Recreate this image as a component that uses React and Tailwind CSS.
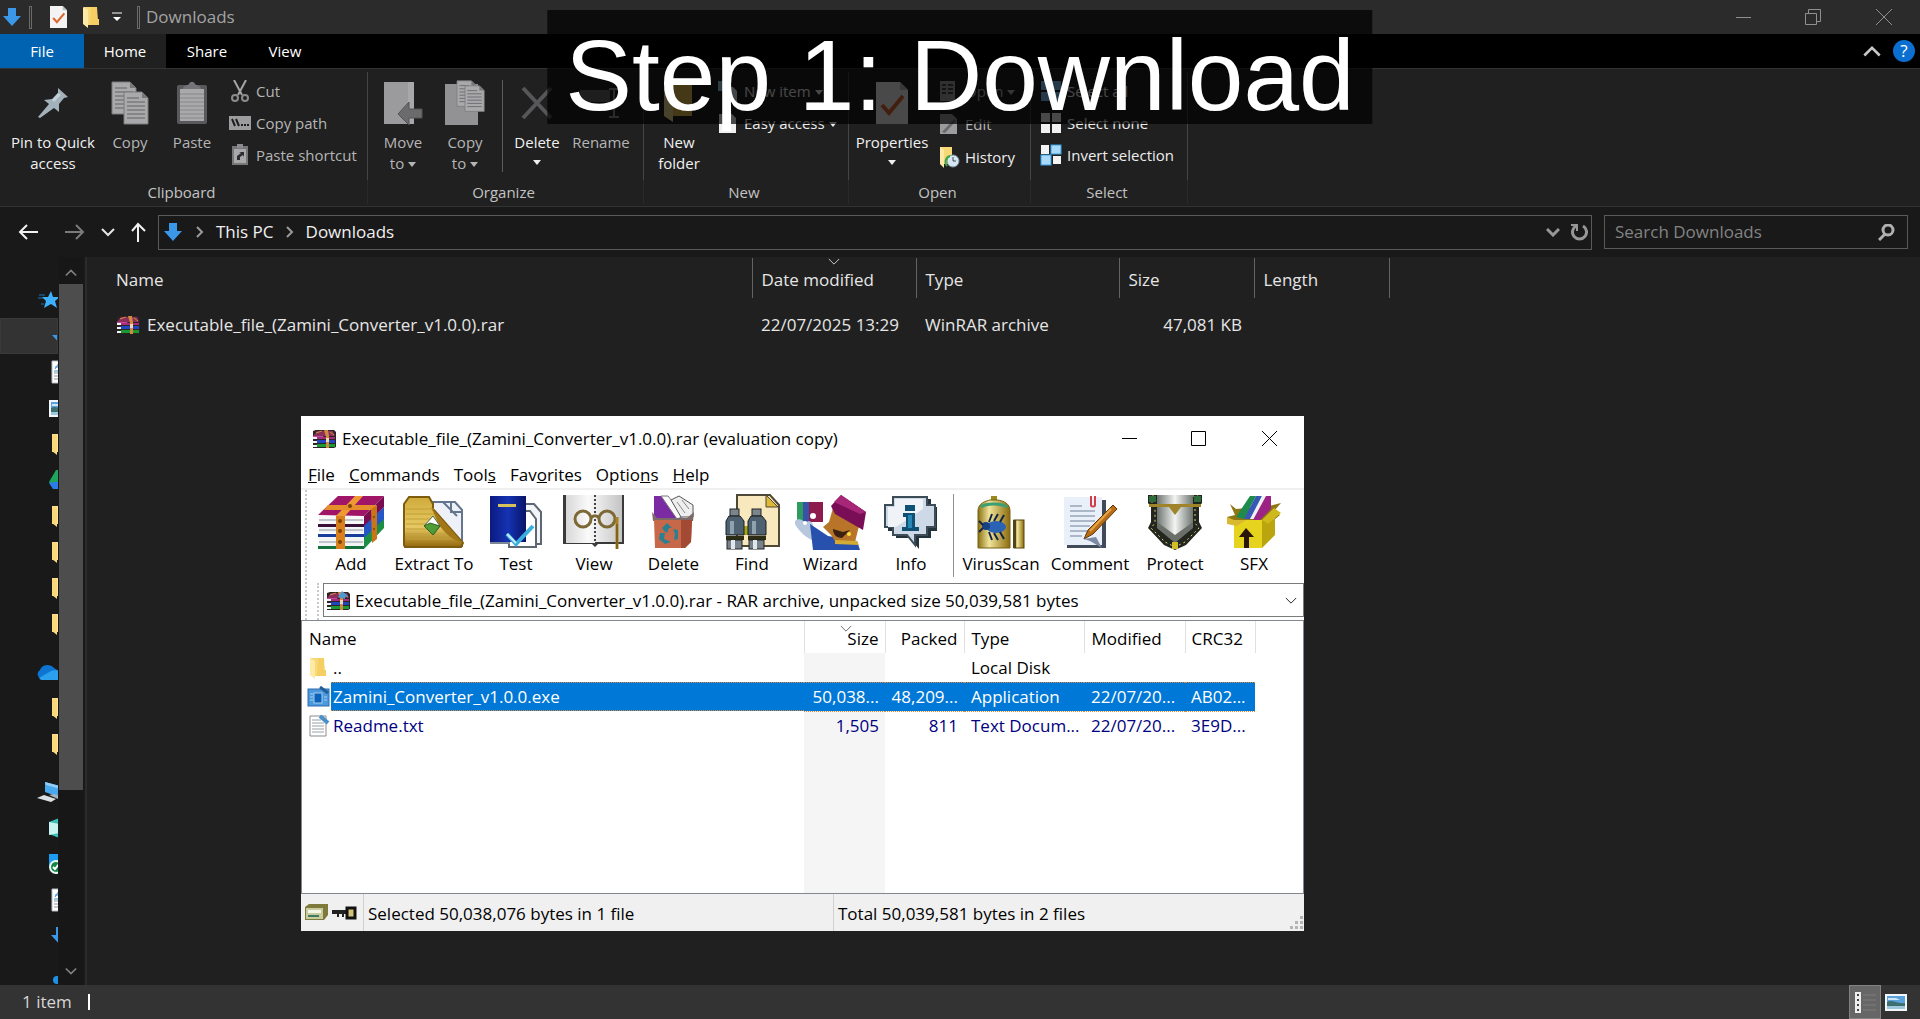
import React from "react";

/* ---------- Explorer icons ---------- */

const DownArrow = ({ className = "" }) => (
  <svg className={`block shrink-0 ${className}`} width="20" height="20" viewBox="0 0 20 20">
    <path d="M6 1h8v8h5l-9 10L1 9h5z" fill="#3b97e8" />
  </svg>
);

const Folder = ({ className = "" }) => (
  <svg className={`block shrink-0 ${className}`} width="18" height="22" viewBox="0 0 18 22">
    <path d="M2 1h13l1 15 -3 3H2z" fill="#f7d978" />
    <path d="M9 1h6v12h2v6H8z" fill="#f5cf63" />
    <path d="M1 1l5 3v18l-5-4z" fill="#ffe9a6" />
  </svg>
);

const SideFolder = () => (
  <svg className="block shrink-0" width="18" height="22" viewBox="0 0 18 22">
    <path d="M1 1h15v18H1z" fill="#ffe49b" />
    <path d="M1 1l5 1v20l-5-4z" fill="#fbd978" />
  </svg>
);

const CheckPage = ({ width, height, className = "" }) => (
  <svg className={`block shrink-0 ${className}`} width={width} height={height} viewBox="0 0 32 42" preserveAspectRatio="none">
    <path d="M0 0h24l8 8v34H0z" fill="#f3f3f3" />
    <path d="M24 0v8h8z" fill="#bdbdbd" />
    <path d="M6 23l7 8 14-17" fill="none" stroke="#dc6730" strokeWidth="4" />
  </svg>
);

const Pin = () => (
  <svg width="32" height="32" viewBox="0 0 32 32">
    <path d="M21 1l10 9-4 1-5 6 0 8-5-4L3 31l-2-1 11-13-5-4 8-1 6-6z" fill="#a3b1ba" />
    <path d="M21 6l-6 7 2 2 7-7z" fill="#c3d0d8" />
  </svg>
);

const Sheet = ({ x, y }) => (
  <g transform={`translate(${x} ${y})`}>
    <path d="M0 0h18l6 6v26H0z" fill="#a9a9ab" stroke="#7b7b7d" strokeWidth="1" />
    <path d="M18 0v6h6z" fill="#77777a" />
    <path d="M3 6h12M3 10h18M3 14h18M3 18h18M3 22h18M3 26h18" stroke="#626266" strokeWidth="1" />
  </g>
);

const CopyIcon = () => (
  <svg width="38" height="44" viewBox="0 0 38 44">
    <Sheet x={1} y={1} />
    <Sheet x={13} y={11} />
  </svg>
);

const PasteIcon = () => (
  <svg width="32" height="44" viewBox="0 0 32 44">
    <rect x="1" y="4" width="30" height="39" rx="2" fill="#59595c" />
    <rect x="4" y="8" width="24" height="32" fill="#a9a9ab" />
    <path d="M4 13h24M4 17h24M4 21h24M4 25h24M4 29h24M4 33h24M4 37h24" stroke="#88888b" />
    <path d="M7 8c0-4 4-3 6-5 1-3 5-3 6 0 2 2 6 1 6 5z" fill="#747478" />
  </svg>
);

const Scissors = () => (
  <svg width="22" height="22" viewBox="0 0 22 22" fill="none" stroke="#8b8b8d" strokeWidth="2">
    <path d="M5 0l8 15M17 0L9 15" stroke="#a5a5a7" />
    <circle cx="6" cy="18" r="3" />
    <circle cx="16" cy="18" r="3" />
  </svg>
);

const PathIcon = () => (
  <svg width="22" height="14" viewBox="0 0 22 14">
    <rect width="22" height="14" fill="#9c9c9e" />
    <path d="M3 3l3 7M7 3l3 7" stroke="#1d1d1d" strokeWidth="2" />
    <path d="M12 9h2M15 9h2M18 9h2" stroke="#1d1d1d" strokeWidth="2" />
  </svg>
);

const PasteShortcutIcon = () => (
  <svg width="22" height="22" viewBox="0 0 22 22">
    <rect x="3" y="2" width="16" height="19" fill="#77777a" />
    <rect x="5" y="5" width="12" height="14" fill="#a9a9ab" />
    <rect x="8" y="0" width="6" height="4" fill="#8b8b8d" />
    <path d="M8 16v-4l4-3-2-1h5v5l-1-2-3 2v3z" fill="#2d2d2f" />
  </svg>
);

const MoveToIcon = () => (
  <svg width="40" height="44" viewBox="0 0 40 44">
    <path d="M1 1h30v42H1z" fill="#9b9b9d" />
    <path d="M25 1h6v42h-6z" fill="#a8a8aa" />
    <path d="M15 33l11-12v7h13v9H26v7z" fill="#6b6b6e" stroke="#545457" />
  </svg>
);

const CopyToIcon = () => (
  <svg width="40" height="46" viewBox="0 0 40 46">
    <path d="M0 4h33v41H0z" fill="#929295" />
    <g transform="translate(12 0) scale(.8)"><Sheet x={0} y={1} /></g>
    <g transform="translate(20 5) scale(.8)"><Sheet x={0} y={1} /></g>
  </svg>
);

const DeleteX = () => (
  <svg width="34" height="34" viewBox="0 0 34 34" stroke="#57575a" strokeWidth="4">
    <path d="M3 2l28 30M31 2L3 32" />
  </svg>
);

const RenameIcon = () => (
  <svg width="42" height="30" viewBox="0 0 42 30">
    <rect x="0" y="2" width="30" height="12" fill="#66666a" />
    <path d="M34 2v26M29 1h10M29 29h10" stroke="#8e8e92" strokeWidth="2" />
  </svg>
);

const BigFolder = () => (
  <svg width="30" height="38" viewBox="0 0 30 38">
    <path d="M2 0h26v32H2z" fill="#e8bd4c" />
    <path d="M0 4l9 4v30l-9-6z" fill="#f6dc8c" />
  </svg>
);

const NewItemIcon = () => (
  <svg width="22" height="22" viewBox="0 0 22 22">
    <path d="M1 1h13v10H1z" fill="#9ecbe8" />
    <path d="M7 7h9l4 4v11H7z" fill="#e3e6ea" />
  </svg>
);

const EasyAccessIcon = () => (
  <svg width="22" height="22" viewBox="0 0 22 22">
    <path d="M2 2h13l4 4v15H2z" fill="#f0f0f0" />
    <path d="M5 8h10M5 11h10" stroke="#b8b8b8" />
  </svg>
);

const OpenIcon = () => (
  <svg width="22" height="22" viewBox="0 0 22 22">
    <path d="M2 1h15v20H2z" fill="#a0a0a2" />
    <path d="M4 5h4M4 9h4M4 13h4M10 5h5M10 9h5M10 13h5" stroke="#454547" strokeWidth="2" />
  </svg>
);

const EditIcon = () => (
  <svg width="22" height="22" viewBox="0 0 22 22">
    <path d="M2 1h12l5 5v15H2z" fill="#9c9c9e" />
    <path d="M4 19L16 6l2 2L7 20z" fill="#6b6b6e" />
  </svg>
);

const HistoryIcon = () => (
  <svg width="22" height="22" viewBox="0 0 22 22">
    <path d="M2 1h12v17H2z" fill="#f7d978" />
    <path d="M2 1l4 3v18l-4-4z" fill="#ffe9a6" />
    <circle cx="15" cy="15" r="6" fill="#d7e6f2" stroke="#7d92a0" />
    <path d="M15 11v4h3" stroke="#3a4a55" fill="none" />
    <path d="M9 20c-3-4-1-9 3-10" stroke="#3fa546" strokeWidth="2" fill="none" />
  </svg>
);

const Squares = ({ colors }) => (
  <svg width="22" height="22" viewBox="0 0 22 22">
    <rect x="1" y="1" width="9" height="9" fill={colors[0]} />
    <rect x="12" y="1" width="9" height="9" fill={colors[1]} />
    <rect x="1" y="12" width="9" height="9" fill={colors[2]} />
    <rect x="12" y="12" width="9" height="9" fill={colors[3]} />
  </svg>
);

const InvertIcon = () => (
  <svg width="22" height="22" viewBox="0 0 22 22">
    <rect x="1" y="1" width="8" height="9" fill="#f4f4f4" />
    <rect x="11" y="1" width="10" height="9" fill="#a8dbfa" stroke="#3b9fe0" />
    <rect x="1" y="11" width="10" height="10" fill="#a8dbfa" stroke="#3b9fe0" />
    <rect x="13" y="12" width="8" height="8" fill="#f4f4f4" />
  </svg>
);

const Caret = () => (
  <svg className="ml-1 inline-block align-middle" width="8" height="5" viewBox="0 0 8 5">
    <path d="M0 0h8L4 5z" fill="currentColor" />
  </svg>
);

const DocIcon = () => (
  <svg className="block shrink-0" width="20" height="24" viewBox="0 0 20 24">
    <path d="M2 1h17v22H2z" fill="#fff" stroke="#b9bcc0" />
    <path d="M5 9l4-6v6M5 7h4" stroke="#3c8fd0" fill="none" />
    <path d="M4 11h12" stroke="#3c8fd0" />
    <path d="M4 13h12M4 16h12M4 19h12" stroke="#8d9298" />
  </svg>
);

const Picture = ({ className = "" }) => (
  <svg className={`block shrink-0 ${className}`} width="22" height="17" viewBox="0 0 22 17">
    <rect width="22" height="17" fill="#f4f7fa" />
    <rect x="2" y="2" width="18" height="13" fill="#5aa2dd" />
    <path d="M2 8c5-3 9 2 18 1v3H2z" fill="#3c6f6d" />
    <path d="M2 12h18v3H2z" fill="#9cc7dd" />
    <path d="M3 4h8l4 2H3z" fill="#cfe6f7" />
  </svg>
);

const Star = () => (
  <svg className="block shrink-0" width="24" height="20" viewBox="0 0 24 20">
    <path d="M13 1l2 6h7l-5 4 2 7-6-4-7 4 2-7-4-4h6z" fill="#3fb0fa" />
    <path d="M1 5h6M0 8h5M3 14h3" stroke="#1d74b8" />
  </svg>
);

const Drive = () => (
  <svg className="block shrink-0" width="22" height="20" viewBox="0 0 22 20">
    <path d="M7 0h8L5 19 0 12z" fill="#1ea55b" />
    <path d="M15 0l7 12h-7L9 3z" fill="#f8c632" />
    <path d="M0 13l5-1h17l-4 7H4z" fill="#2b7ce8" />
  </svg>
);

const Cloud = () => (
  <svg className="block shrink-0" width="28" height="16" viewBox="0 0 28 16">
    <path d="M5 15a5 5 0 0 1-1-9C6 1 13-1 18 4l8 5-3 6z" fill="#0d74d1" />
    <path d="M3 14l12-7c6-2 12 1 12 5 0 3-2 4-4 4H5z" fill="#2aa0ef" />
  </svg>
);

const Computer = () => (
  <svg className="block shrink-0" width="28" height="22" viewBox="0 0 28 22">
    <path d="M8 1l19 5v12L8 11z" fill="#4aa9ee" />
    <path d="M8 1l19 5v3L9 4z" fill="#93cdf7" />
    <path d="M0 17l7-3 12 4-5 3z" fill="#dadfe4" />
    <path d="M12 14l5-1 11 4-5 2z" fill="#aab3ba" />
  </svg>
);

const Cube = () => (
  <svg className="block shrink-0" width="20" height="20" viewBox="0 0 20 20">
    <path d="M0 4L10 0l10 4v12l-10 4L0 16z" fill="#3cbfb9" />
    <path d="M0 4l10 2v9L0 17z" fill="#c9f3f1" />
  </svg>
);

const DesktopSynced = () => (
  <svg className="block shrink-0" width="22" height="22" viewBox="0 0 22 22">
    <rect x="1" y="1" width="20" height="14" fill="#1e9bf2" />
    <circle cx="8" cy="14" r="7" fill="#e8f6ee" />
    <circle cx="8" cy="14" r="5" fill="#16854a" />
    <path d="M5 14l2 2 4-5" stroke="#fff" fill="none" strokeWidth="2" />
  </svg>
);

const Note = () => (
  <svg className="block shrink-0" width="18" height="16" viewBox="0 0 18 16">
    <circle cx="5" cy="12" r="4" fill="#1e90e8" />
    <path d="M8 12V1l8 3" stroke="#1e90e8" strokeWidth="2" fill="none" />
  </svg>
);

const Chevron = ({ dir, width = 14, height = 9, stroke = 2, className = "" }) => (
  <svg className={`block shrink-0 ${className}`} width={width} height={height} viewBox="0 0 14 9" fill="none" stroke="currentColor" strokeWidth={stroke}>
    <path d={dir === "up" ? "M1 8l6-6 6 6" : "M1 1l6 6 6-6"} />
  </svg>
);

/* ---------- WinRAR icons ---------- */

const Books = ({ width, height, className = "" }) => (
  <svg className={`block shrink-0 ${className}`} width={width} height={height} viewBox="0 0 66 54" preserveAspectRatio="none">
    <path d="M1 39h45v14H1z" fill="#f3f4f6" />
    <path d="M0 51h46v3H0z" fill="#13713b" />
    <path d="M46 40l20-20v13L46 54z" fill="#1c8f45" />
    <path d="M1 29h45v9H1z" fill="#f3f4f6" />
    <path d="M0 39h46v3H0z" fill="#173d9d" />
    <path d="M46 30l20-18v12L46 43z" fill="#2456c8" />
    <path d="M1 21h45v8H1z" fill="#f8f8f8" />
    <path d="M0 29h46v3H0z" fill="#3a0f38" />
    <path d="M0 20L20 1h46L46 21z" fill="#a01567" />
    <path d="M46 21L66 1v11L46 31z" fill="#7a0d52" />
    <path d="M1 25h44M1 35h44M1 47h44" stroke="#c1c5cc" strokeWidth="2" />
    <path d="M18 21h9v33h-9z" fill="#d9801d" />
    <path d="M18 21L37 1h8L27 21z" fill="#ee9a34" />
    <path d="M10 10h49l-4 5H6z" fill="#e48f2b" />
    <path d="M53 14l6-4v34l-5 4z" fill="#c8751a" />
    <g fill="#7b4305"><circle cx="22" cy="26" r="2" /><circle cx="22" cy="36" r="2" /><circle cx="22" cy="47" r="2" /><circle cx="56" cy="22" r="1" /><circle cx="56" cy="34" r="1" /><circle cx="32" cy="11" r="2" /></g>
  </svg>
);

const SmallBooks = ({ arrow }) => (
  <svg className="block shrink-0" width="24" height="20" viewBox="0 0 24 20">
    <path d="M4 1h18l2 2v15l-2 1H1V2z" fill="#2c2422" />
    <path d="M5 2h16l2 5H1z" fill="#8a2f5c" />
    <path d="M1 7h10l1 2H1z" fill="#c24a9b" />
    <path d="M1 8h4v2H1zM1 12h4v2H1zM1 16h4v2H1z" fill="#f4f4f4" />
    <path d="M5 8h18v2H5z" fill="#a52b7d" />
    <path d="M5 11h18v3H5z" fill="#2147c0" />
    <path d="M5 15h18v3H5z" fill="#1a9a33" />
    <path d="M12 1h4l1 6v12h-3V8z" fill="#d18a3f" />
    <path d="M14 9h3v4h-3z" fill="#f0d9b0" />
    <path d="M4 4l6-2M18 3l4 3" stroke="#d18a3f" />
    {arrow && <path d="M12 6l4-6 6 5-3 1v2l-4-1z" fill="#4a9bd0" />}
  </svg>
);

const ExtractIcon = () => (
  <svg width="62" height="54" viewBox="0 0 62 54">
    <defs>
      <linearGradient id="gold" x1="0" y1="0" x2="0" y2="1"><stop offset="0" stopColor="#d0ab3c" /><stop offset=".6" stopColor="#e6c964" /><stop offset="1" stopColor="#94690d" /></linearGradient>
    </defs>
    <path d="M30 7h22l7 8v36H30z" fill="#eef2f8" stroke="#65758e" strokeWidth="2" />
    <path d="M48 7v10h10M40 7l14 14" stroke="#65758e" strokeWidth="2" fill="none" />
    <path d="M1 9l5-7h20l4 7v5l30 34-2 4H2l-1-2z" fill="url(#gold)" stroke="#7d5c0e" strokeWidth="2" />
    <path d="M3 14h28M3 19h30M3 24h24M3 29h22M3 34h24M3 39h40M3 44h50" stroke="#c29f37" />
    <path d="M28 12l32 36c-10-2-18-10-24-18z" fill="#a37618" />
    <path d="M21 31l9-10 7 10-7 9z" fill="#fff" stroke="#4c6b3c" />
    <path d="M21 31l6-3 10 3-7 9z" fill="#4f9b35" stroke="#355f28" />
  </svg>
);

const TestIcon = () => (
  <svg width="54" height="54" viewBox="0 0 54 54">
    <defs><linearGradient id="cover"><stop offset="0" stopColor="#0a1a80" /><stop offset=".5" stopColor="#1633b4" /><stop offset="1" stopColor="#081468" /></linearGradient></defs>
    <path d="M34 9h11l7 8v32H34z" fill="#f2f4f8" stroke="#5d6673" strokeWidth="2" />
    <path d="M20 16h21l6 8v28H20z" fill="#fff" stroke="#5d6673" strokeWidth="2" />
    <path d="M1 1h36v46H1z" fill="url(#cover)" />
    <path d="M1 47h20v2H1z" fill="#7c8794" />
    <path d="M9 9h18v3H9z" fill="#d7c15a" />
    <path d="M18 39l9 10 17-18" stroke="#3aaede" strokeWidth="4" fill="none" />
    <path d="M18 39l9 9" stroke="#c2ecfb" strokeWidth="2" />
  </svg>
);

const ViewIcon = () => (
  <svg width="64" height="56" viewBox="0 0 64 56">
    <defs><linearGradient id="leaf"><stop offset="0" stopColor="#d8d8d8" /><stop offset=".4" stopColor="#fafafa" /><stop offset="1" stopColor="#c4c4c4" /></linearGradient></defs>
    <path d="M1 1v49h29l3 3 3-3h26V1" fill="#3a3a3a" />
    <path d="M4 1h29v48H4zM33 1h27v47H33z" fill="url(#leaf)" />
    <path d="M33 1v50" stroke="#444" strokeWidth="2" strokeDasharray="2 2" />
    <g fill="none" stroke="#7d6936" strokeWidth="3"><circle cx="21" cy="25" r="8" /><circle cx="45" cy="25" r="8" /><path d="M29 24c2-3 6-3 8 0" /></g>
    <path d="M55 23v32" stroke="#a98323" strokeWidth="3" />
    <path d="M55 30v25" stroke="#5b440b" />
  </svg>
);

const DeleteIcon = () => (
  <svg width="46" height="54" viewBox="0 0 46 54">
    <path d="M3 1h10l14 22H3z" fill="#7b2aa4" />
    <path d="M10 1h7l16 20-7 3z" fill="#fafafa" stroke="#777" />
    <path d="M20 5l8-4 14 9v12H30z" fill="#eee" stroke="#555" />
    <path d="M26 7l8 11M31 5l7 9" stroke="#888" />
    <path d="M1 17l5 6h30l7-6-1 9H2z" fill="#7d6a68" />
    <path d="M3 25h38l-1 22-6 6H4z" fill="#c8684a" />
    <path d="M30 25h11l-1 22-6 6h-4z" fill="#a34a34" />
    <path d="M11 33l5-5 5 5h-3l-2 5-3-2zM22 34l5 1v9l-4 1 1-6zM9 38h5l-1 6 7 3-6 2-6-5z" fill="#2a8090" />
  </svg>
);

const FindIcon = () => (
  <svg width="56" height="56" viewBox="0 0 56 56">
    <path d="M13 1h33l9 10v41H13z" fill="#f7e9bd" stroke="#4e4937" strokeWidth="2" />
    <path d="M42 1v12h12z" fill="#dcb834" stroke="#4e4937" />
    <path d="M19 32h9v9h-9z" fill="#a4a511" />
    {[2, 24].map((x) => (
      <g key={x} transform={`translate(${x} 15)`}>
        <rect x="4" y="0" width="9" height="7" fill="#7a858c" stroke="#20262a" />
        <path d="M3 7h11l4 5v14H0V12z" fill="#4d6170" stroke="#1a2024" />
        <path d="M4 12h4v13H4z" fill="#8ea3ae" />
        <rect x="0" y="27" width="18" height="4" fill="#2d2d13" />
        <rect x="1" y="31" width="15" height="9" fill="#77828a" stroke="#222" />
        <rect x="5" y="31" width="4" height="9" fill="#e1e7ea" />
      </g>
    ))}
  </svg>
);

const WizardIcon = () => (
  <svg width="72" height="56" viewBox="0 0 72 56">
    <path d="M2 8h6v20H2z" fill="#2e9b61" /><path d="M8 8h6v20H8z" fill="#3653a8" /><path d="M14 8h14v20H14z" fill="#8e1b4e" />
    <path d="M0 27c6-5 8 3 14 0 6 2 4 6 2 10l6 6-3 4C12 44 4 38 0 30z" fill="#b7c8dd" />
    <path d="M15 30l18 12 29 5 3 9H18z" fill="#2850ad" />
    <path d="M38 14l26 18-4 16-20-1-4-6-8-8 6-5z" fill="#b8752a" />
    <path d="M38 35c0 5 3 9 9 9l8-8-7 2z" fill="#3a2112" />
    <path d="M46 1l25 17-3 18-28-16-4-8z" fill="#7a0e56" />
    <path d="M46 1l25 17-6 2-26-12z" fill="#a82678" />
    <circle cx="54" cy="40" r="2" fill="#ffdf36" />
    <path d="M40 46l22 1 2 4-24-1z" fill="#d4ab35" />
    <g fill="#fff"><circle cx="18" cy="22" r="3" /><circle cx="10" cy="29" r="2" /></g>
  </svg>
);

const InfoIcon = () => (
  <svg width="54" height="54" viewBox="0 0 54 54">
    <path d="M11 4h36v8h6v24h-6v7H35v11L26 43H12v-7H4V13h7z" fill="#23343d" />
    <path d="M9 2h34v8h8v22h-8v8H31v10l-8-10H9v-8H1V10h8z" fill="#cdd9e6" stroke="#3c4d57" strokeWidth="2" />
    <path d="M11 4h28v10L12 32H4V12h7z" fill="#eff3f8" />
    <path d="M21 10h10v6H21zM19 18h12v14h4v4H18v-4h4V22h-3z" fill="#0f5175" />
    <path d="M24 20h4v13h-4z" fill="#2688b5" />
  </svg>
);

const VirusIcon = () => (
  <svg width="48" height="54" viewBox="0 0 48 54">
    <defs><linearGradient id="can"><stop offset="0" stopColor="#8a7012" /><stop offset=".35" stopColor="#f0e49a" /><stop offset="1" stopColor="#8c6b0d" /></linearGradient></defs>
    <path d="M14 1h6v5h-6z" fill="#9a891b" />
    <path d="M1 16c0-8 8-10 12-11h8c5 1 12 3 12 11v37H1z" fill="url(#can)" stroke="#776114" />
    <path d="M4 12c5-4 20-4 26 0" stroke="#3da075" strokeWidth="3" fill="none" />
    <rect x="37" y="25" width="10" height="28" fill="url(#can)" stroke="#574508" />
    <path d="M36 25h3v28h-3z" fill="#51441a" />
    <ellipse cx="19" cy="32" rx="10" ry="6" fill="#2a63b4" /><circle cx="9" cy="31" r="4" fill="#173f81" />
    <path d="M12 27l3-8M17 26l4-7M23 27l4-7M12 37l3 8M17 38l4 7M23 37l4 7M6 30l-4-4M6 33l-4 4" stroke="#142344" strokeWidth="2" />
  </svg>
);

const CommentIcon = () => (
  <svg width="54" height="54" viewBox="0 0 54 54">
    <path d="M4 5h39v48H4z" fill="#404a58" />
    <path d="M1 2h38v48H1z" fill="#e9f0fa" />
    <path d="M7 11h12M7 16h25M7 21h25M7 26h25M7 31h20M7 36h17M7 41h12" stroke="#6f8096" strokeWidth="1" />
    <path d="M28 1v9c0 2 4 2 4 0V1" stroke="#d23d4a" strokeWidth="2" fill="none" />
    <path d="M50 10l4 4-24 25-9 5 4-9z" fill="#b96d17" stroke="#5e3605" />
    <path d="M48 14L27 36" stroke="#e5a648" strokeWidth="2" />
    <path d="M21 44l6 2 12 7-6-11z" fill="#7c8ba3" />
  </svg>
);

const ShieldIcon = () => (
  <svg width="56" height="56" viewBox="0 0 56 56">
    <defs><linearGradient id="steel"><stop offset="0" stopColor="#6e746f" /><stop offset=".5" stopColor="#f2f5f3" /><stop offset="1" stopColor="#6e746f" /></linearGradient></defs>
    <path d="M1 1h54v8l-3 4v15l3 6-16 17-11 5-11-5L1 34l3-6V13L1 9z" fill="#23251f" />
    <path d="M5 2h46v7l-3 4v16l4 5-14 14-10 5-10-5L4 34l4-5V13L5 9z" fill="none" stroke="#ddd36f" strokeWidth="1" strokeDasharray="2 3" />
    <path d="M10 1h36v29L28 47 10 30z" fill="url(#steel)" />
    <path d="M10 28l18 13 18-13v6L28 49 10 34z" fill="#6a7069" />
    <path d="M2 10h52v3H34l-6 8-6-8H2z" fill="#9f8429" />
    <path d="M2 2h7v6H2zM47 2h7v6h-7z" fill="#2e6c3c" />
    <path d="M25 48h6v7h-6z" fill="#d2bc2a" />
  </svg>
);

const SfxIcon = () => (
  <svg width="56" height="54" viewBox="0 0 56 54">
    <path d="M10 14L4 9l5 11-8 2 7 8h34l12-10-6-4 7-8-12 3z" fill="#8f7614" />
    <path d="M10 22L24 1h6L18 24z" fill="#1e8a4b" /><path d="M18 24L30 1h6L26 24z" fill="#3559b5" /><path d="M24 24L36 1h4L29 24z" fill="#f1f1f1" /><path d="M27 25L40 1h5v13L34 25z" fill="#9a2383" />
    <path d="M8 25h28v28H8z" fill="#e6d31d" />
    <path d="M36 25l13-12v27L36 53z" fill="#baa50e" />
    <path d="M36 25l12-12 7 5-13 11z" fill="#cdb91c" />
    <path d="M1 22l7 3h12l-9 6-10-2z" fill="#d8b92f" />
    <path d="M20 33l8 9h-5v11h-5V42h-5z" fill="#2a1405" />
  </svg>
);

const AppIcon = () => (
  <svg className="block shrink-0" width="23" height="22" viewBox="0 0 23 22">
    <rect x="1" y="3" width="21" height="17" fill="#4b98dc" stroke="#2d6fb1" />
    <rect x="7" y="7" width="8" height="10" fill="#0b62b6" stroke="#a6d0f2" />
    <path d="M3 8h3M3 11h3M3 14h3M17 11h3M17 14h3" stroke="#a8d2f4" />
    <path d="M13 1l8 6" stroke="#235f98" strokeWidth="3" />
  </svg>
);

const TxtIcon = () => (
  <svg className="block shrink-0" width="23" height="22" viewBox="0 0 23 22">
    <path d="M3 1h16v20H3z" fill="#fff" stroke="#8b8b8b" />
    <path d="M5 5h9M5 8h12M5 11h12M5 14h12M5 17h12" stroke="#9aa0a6" />
    <path d="M13 1l8 7" stroke="#4a90c8" strokeWidth="4" />
  </svg>
);

/* ---------- Explorer ribbon parts ---------- */

const BigButton = ({ icon, lines, caret, className = "" }) => (
  <button type="button" className={`flex flex-col items-center whitespace-nowrap pt-2 leading-[21px] ${className}`}>
    <span className="mb-[6px] flex h-[46px] items-center justify-center">{icon}</span>
    {lines.map((l, i) => (
      <span key={l}>
        {l}
        {caret === "inline" && i === lines.length - 1 && <Caret />}
      </span>
    ))}
    {caret === "below" && <span className="-ml-1 leading-[16px]"><Caret /></span>}
  </button>
);

const SmallButton = ({ icon, label, caret, dim }) => (
  <button type="button" className={`flex h-8 items-center gap-[5px] whitespace-nowrap ${dim ? "text-[#b5b5b5]" : "text-[#ededed]"}`}>
    <span className="flex w-[22px] justify-center">{icon}</span>
    <span>{label}{caret && <Caret />}</span>
  </button>
);

const Group = ({ label, className, children }) => (
  <section aria-label={label} className={`flex flex-col ${className}`}>
    <div className="flex h-[108px] border-r border-[#454545]">{children}</div>
    <div className="border-r border-[#2a2a2a] pr-1 text-center leading-[24px] text-[#c3c3c3]">{label}</div>
  </section>
);

const Ribbon = () => (
  <div className="flex h-[139px] border-b border-t border-[#333] bg-[#202020] pt-[3px] text-[15px] text-[#f0f0f0]">
    <Group label="Clipboard" className="w-[368px]">
      <BigButton className="ml-1 w-[98px]" icon={<Pin />} lines={["Pin to Quick", "access"]} />
      <BigButton className="w-14 text-[#b5b5b5]" icon={<CopyIcon />} lines={["Copy"]} />
      <BigButton className="w-[68px] text-[#b5b5b5]" icon={<PasteIcon />} lines={["Paste"]} />
      <div className="flex flex-col pl-[3px] pt-[3px]">
        <SmallButton dim icon={<Scissors />} label="Cut" />
        <SmallButton dim icon={<PathIcon />} label="Copy path" />
        <SmallButton dim icon={<PasteShortcutIcon />} label="Paste shortcut" />
      </div>
    </Group>
    <Group label="Organize" className="w-[276px]">
      <BigButton className="w-[70px] text-[#b5b5b5]" icon={<MoveToIcon />} lines={["Move", "to"]} caret="inline" />
      <BigButton className="w-[54px] text-[#b5b5b5]" icon={<CopyToIcon />} lines={["Copy", "to"]} caret="inline" />
      <div className="mx-[10px] my-2 w-px bg-[#5c5c5c]" />
      <BigButton className="w-[48px]" icon={<DeleteX />} lines={["Delete"]} caret="below" />
      <BigButton className="w-[80px] text-[#b5b5b5]" icon={<RenameIcon />} lines={["Rename"]} />
    </Group>
    <Group label="New" className="w-[205px]">
      <BigButton className="w-[70px]" icon={<BigFolder />} lines={["New", "folder"]} />
      <div className="flex flex-col pl-[3px] pt-[3px]">
        <SmallButton icon={<NewItemIcon />} label="New item" caret />
        <SmallButton icon={<EasyAccessIcon />} label="Easy access" caret />
      </div>
    </Group>
    <Group label="Open" className="w-[182px]">
      <BigButton className="w-[86px]" icon={<CheckPage width={32} height={42} />} lines={["Properties"]} caret="below" />
      <div className="flex flex-col gap-[1px] pl-[3px] pt-[3px]">
        <SmallButton dim icon={<OpenIcon />} label="Open" caret />
        <SmallButton dim icon={<EditIcon />} label="Edit" />
        <SmallButton icon={<HistoryIcon />} label="History" />
      </div>
    </Group>
    <Group label="Select" className="w-[157px]">
      <div className="flex flex-col pl-[9px] pt-[3px]">
        <SmallButton icon={<Squares colors={["#7cc4f2", "#7cc4f2", "#7cc4f2", "#7cc4f2"]} />} label="Select all" />
        <SmallButton icon={<Squares colors={["#f0f0f0", "#f0f0f0", "#f0f0f0", "#f0f0f0"]} />} label="Select none" />
        <SmallButton icon={<InvertIcon />} label="Invert selection" />
      </div>
    </Group>
  </div>
);

const TitleBar = () => (
  <header className="flex h-[34px] items-center bg-[#2b2b2b] text-[17px] text-[#a3a3a3]">
    <DownArrow className="ml-[2px]" />
    <span className="ml-[7px] h-[23px] w-[3px] border border-[#6a6a6a]" />
    <button type="button" aria-label="Properties" className="ml-[18px]"><CheckPage width={17} height={22} /></button>
    <button type="button" aria-label="New folder" className="ml-[15px]"><Folder /></button>
    <button type="button" aria-label="Customize toolbar" className="ml-[12px]">
      <svg className="block" width="10" height="10" viewBox="0 0 10 10"><path d="M0 1h10" stroke="#fff" /><path d="M1 5h8L5 9z" fill="#fff" /></svg>
    </button>
    <span className="ml-[15px] h-[23px] w-[3px] border border-[#6a6a6a]" />
    <h1 className="ml-[6px]">Downloads</h1>
    <div className="ml-auto flex items-center text-[#8f8f8f]">
      <button type="button" aria-label="Minimize" className="flex w-[70px] justify-center"><svg width="15" height="15"><path d="M0 7.5h15" stroke="currentColor" /></svg></button>
      <button type="button" aria-label="Restore" className="flex w-[70px] justify-center"><svg width="16" height="16" fill="none" stroke="currentColor"><path d="M.5 4.500h11v11h-11zM3.500 4V.5h12v12H12" /></svg></button>
      <button type="button" aria-label="Close" className="flex w-[72px] justify-center"><svg width="16" height="16" stroke="currentColor"><path d="M0 0l16 16M16 0L0 16" /></svg></button>
    </div>
  </header>
);

const Tabs = () => (
  <nav className="flex h-[34px] items-stretch bg-black text-[15px] text-white">
    <button type="button" className="w-[84px] bg-[#0063b1]">File</button>
    <button type="button" className="w-[82px] bg-[#202020]">Home</button>
    <button type="button" className="w-[82px]">Share</button>
    <button type="button" className="w-[74px]">View</button>
    <div className="ml-auto flex items-center gap-3 pr-[5px]">
      <button type="button" aria-label="Collapse ribbon"><Chevron dir="up" width={18} height={12} className="text-[#c8c8c8]" /></button>
      <button type="button" aria-label="Help" className="size-[22px] rounded-full bg-[#0a6fd0] text-[17px] leading-[22px] text-white">?</button>
    </div>
  </nav>
);

const Arrow = ({ d, color }) => (
  <svg className="block" width="20" height="20" viewBox="0 0 20 20" fill="none" stroke={color} strokeWidth="2"><path d={d} /></svg>
);

const Crumb = () => (
  <svg className="block shrink-0 text-[#9b9b9b]" width="8" height="12" viewBox="0 0 8 12" fill="none" stroke="currentColor" strokeWidth="2"><path d="M1 1l5 5-5 5" /></svg>
);

const AddressRow = () => (
  <div className="flex h-[50px] items-center bg-[#191919] pr-3 text-[17px]">
    <button type="button" aria-label="Back" className="ml-[18px]"><Arrow d="M9 3l-7 7 7 7M2 10h18" color="#f2f2f2" /></button>
    <button type="button" aria-label="Forward" className="ml-[27px]"><Arrow d="M11 3l7 7-7 7M18 10H0" color="#7b7b7b" /></button>
    <button type="button" aria-label="Recent locations" className="ml-[16px]"><Chevron dir="down" className="text-[#e5e5e5]" /></button>
    <button type="button" aria-label="Up" className="ml-[14px]"><Arrow d="M3 9l6-7 7 7M9 2v18" color="#f2f2f2" /></button>
    <div className="ml-[9px] flex h-[35px] flex-1 items-center border border-[#5a5a5a] text-[#f0f0f0]">
      <DownArrow className="ml-1" />
      <span className="ml-[13px]"><Crumb /></span>
      <a href="#this-pc" className="ml-[12px]">This PC</a>
      <span className="ml-[12px]"><Crumb /></span>
      <a href="#downloads" className="ml-[12px]">Downloads</a>
      <button type="button" aria-label="Previous locations" className="ml-auto"><Chevron dir="down" stroke={3} className="text-[#979797]" /></button>
      <button type="button" aria-label="Refresh" className="ml-[11px] mr-[3px]">
        <svg className="block" width="17" height="18" viewBox="0 0 17 18" fill="none" stroke="#979797" strokeWidth="3"><path d="M12 3a7 7 0 1 1-7 0" /><path d="M0 2h6v6" strokeWidth="2" /></svg>
      </button>
    </div>
    <label className="ml-3 flex h-[34px] w-[304px] items-center border border-[#5a5a5a] pl-[10px] pr-3">
      <input type="text" aria-label="Search Downloads" placeholder="Search Downloads" className="min-w-0 flex-1 bg-transparent outline-none placeholder:text-[#838383]" />
      <svg width="17" height="17" viewBox="0 0 17 17" fill="none" stroke="#b0b0b0" strokeWidth="3"><circle cx="10" cy="6" r="5" /><path d="M7 10l-6 6" /></svg>
    </label>
  </div>
);

const sideGroups = [
  [
    ["Quick access", Star, "pl-[38px]"],
    ["Downloads", DownArrow, "pl-[50px]", true],
    ["Documents", DocIcon, "pl-[50px]"],
    ["Pictures", Picture, "pl-[49px]"],
    ["Folder 1", SideFolder, "pl-[51px]"],
    ["Google Drive", Drive, "pl-[49px]"],
    ["Folder 2", SideFolder, "pl-[51px]"],
    ["Folder 3", SideFolder, "pl-[51px]"],
    ["Folder 4", SideFolder, "pl-[51px]"],
    ["Folder 5", SideFolder, "pl-[51px]"],
  ],
  [
    ["OneDrive", Cloud, "pl-[36px]"],
    ["OneDrive folder 1", SideFolder, "pl-[51px]"],
    ["OneDrive folder 2", SideFolder, "pl-[51px]"],
  ],
  [
    ["This PC", Computer, "pl-[37px]"],
    ["3D Objects", Cube, "pl-[49px]"],
    ["Desktop", DesktopSynced, "pl-[48px]"],
    ["PC documents", DocIcon, "pl-[50px]"],
    ["PC downloads", DownArrow, "pl-[50px]"],
    ["Music", Note, "pl-[52px] pt-2"],
  ],
];

const Sidebar = () => (
  <aside className="flex w-[87px] shrink-0 border-r-2 border-[#2b2b2b] bg-[#191919]">
    <nav aria-label="Folders" className="flex w-[58px] flex-col gap-3 overflow-hidden pt-[25px]">
      {sideGroups.map((g) => (
        <div key={g[0][0]}>
          {g.map(([name, Icon, pad, on]) => (
            <button key={name} type="button" aria-label={name} className={`flex h-9 w-full items-center overflow-hidden ${pad} ${on ? "border border-[#3a3a3a] bg-[#333]" : ""}`}>
              <Icon />
            </button>
          ))}
        </div>
      ))}
    </nav>
    <div className="ml-px flex w-6 flex-col items-center bg-[#171717] text-[#808080]">
      <button type="button" aria-label="Scroll up" className="flex h-[27px] shrink-0 items-center"><Chevron dir="up" width={12} height={9} className="mt-1" /></button>
      <div className="flex w-full flex-1 flex-col"><div className="h-[75%] bg-[#4d4d4d]" /></div>
      <button type="button" aria-label="Scroll down" className="flex h-[27px] shrink-0 items-center"><Chevron dir="down" width={12} height={9} /></button>
    </div>
  </aside>
);

const FileTable = () => (
  <main className="flex-1 bg-[#202020] pt-px text-[17px] text-[#e6e6e6]">
    <table className="w-full table-fixed border-collapse text-left">
      <colgroup><col className="w-[665px]" /><col className="w-[164px]" /><col className="w-[203px]" /><col className="w-[135px]" /><col className="w-[135px]" /><col /></colgroup>
      <thead>
        <tr className="h-10">
          <th className="border-r border-[#636363] pl-[29px] pt-1 font-normal">Name</th>
          <th className="relative whitespace-nowrap border-r border-[#636363] pl-[9px] pt-1 font-normal">
            Date modified
            <Chevron dir="down" width={12} height={8} stroke={1} className="absolute left-[75px] top-0" />
          </th>
          <th className="border-r border-[#636363] pl-[9px] pt-1 font-normal">Type</th>
          <th className="border-r border-[#636363] pl-[9px] pt-1 font-normal">Size</th>
          <th className="border-r border-[#636363] pl-[9px] pt-1 font-normal">Length</th>
          <th />
        </tr>
      </thead>
      <tbody>
        <tr className="h-[54px] whitespace-nowrap">
          <td className="pl-[29px]"><span className="flex items-center gap-[7px]"><SmallBooks />Executable_file_(Zamini_Converter_v1.0.0).rar</span></td>
          <td className="pl-[9px]">22/07/2025 13:29</td>
          <td className="pl-[9px]">WinRAR archive</td>
          <td className="pr-3 text-right">47,081 KB</td>
          <td />
          <td />
        </tr>
      </tbody>
    </table>
  </main>
);

const StatusBar = () => (
  <footer className="flex h-[34px] items-center bg-[#333] pl-[22px] text-[17px] text-[#d6d6d6]">
    1 item
    <span className="ml-4 h-4 w-[2px] bg-white" />
    <button type="button" aria-label="Details view" className="ml-auto flex h-full w-8 items-center border border-[#828282] bg-[#666] pl-[5px]">
      <svg width="24" height="21" viewBox="0 0 24 21"><path d="M0 0h6v21H0z" fill="#eee" /><path d="M2 2h2v2H2zM2 7h2v2H2zM2 12h2v2H2zM2 17h2v2H2z" fill="#444" /><path d="M8 3h13M8 8h13M8 13h13M8 18h13" stroke="#7c7c7c" /></svg>
    </button>
    <button type="button" aria-label="Thumbnail view" className="ml-1 mr-[13px]"><Picture /></button>
  </footer>
);

/* ---------- WinRAR window ---------- */

const menu = [["", "F", "ile"], ["", "C", "ommands"], ["Tool", "s", ""], ["Fav", "o", "rites"], ["Optio", "n", "s"], ["", "H", "elp"]];

const tools = [
  ["Add", <Books width={66} height={54} />, "w-[78px]"],
  ["Extract To", <ExtractIcon />, "w-[88px]"],
  ["Test", <TestIcon />, "w-[76px]"],
  ["View", <ViewIcon />, "w-[80px]"],
  ["Delete", <DeleteIcon />, "w-[79px]"],
  ["Find", <FindIcon />, "w-[78px]"],
  ["Wizard", <WizardIcon />, "w-[79px]"],
  ["Info", <InfoIcon />, "w-[82px]"],
  null,
  ["VirusScan", <VirusIcon />, "w-[92px]"],
  ["Comment", <CommentIcon />, "w-[86px]"],
  ["Protect", <ShieldIcon />, "w-[84px]"],
  ["SFX", <SfxIcon />, "w-[74px]"],
];

const archiveRows = [
  { icon: <Folder className="mx-[2px]" />, cells: ["..", "", "", "Local Disk", "", ""], tone: "text-black" },
  { icon: <AppIcon />, cells: ["Zamini_Converter_v1.0.0.exe", "50,038...", "48,209...", "Application", "22/07/20...", "AB02..."], tone: "text-white", selected: true },
  { icon: <TxtIcon />, cells: ["Readme.txt", "1,505", "811", "Text Docum...", "22/07/20...", "3E9D..."], tone: "text-[#000080]" },
];

const ArchiveList = () => (
  <div className="flex flex-1 border border-[#828790] bg-white">
    <table className="w-full table-fixed border-collapse whitespace-nowrap text-left">
      <colgroup><col className="w-[502px]" /><col className="w-[81px]" /><col className="w-[79px]" /><col className="w-[120px]" /><col className="w-[101px]" /><col className="w-[70px]" /><col /></colgroup>
      <thead>
        <tr className="h-8">
          <th className="border-r border-[#e0e0e0] pl-[7px] pt-1 font-normal">Name</th>
          <th className="relative border-r border-[#e0e0e0] pr-[6px] pt-1 text-right font-normal">
            Size
            <Chevron dir="down" width={12} height={8} stroke={1} className="absolute left-[35px] top-1 text-[#555]" />
          </th>
          <th className="border-r border-[#e0e0e0] pr-[6px] pt-1 text-right font-normal">Packed</th>
          <th className="border-r border-[#e0e0e0] pl-[7px] pt-1 font-normal">Type</th>
          <th className="border-r border-[#e0e0e0] pl-[7px] pt-1 font-normal">Modified</th>
          <th className="border-r border-[#e0e0e0] pl-[6px] pt-1 font-normal">CRC32</th>
          <th />
        </tr>
      </thead>
      <tbody>
        {archiveRows.map(({ icon, cells, tone, selected }) => {
          const bg = selected ? "bg-[#0078d7] border-y border-dotted border-[#d98b3a]" : "";
          return (
            <tr key={cells[0]} className={`h-[29px] ${tone}`}>
              <td className="p-0">
                <span className="flex h-[29px] items-center pl-[5px]">
                  <span className="flex w-[24px] shrink-0">{icon}</span>
                  <span className={`flex h-full flex-1 items-center pl-[2px] ${bg}`}>{cells[0]}</span>
                </span>
              </td>
              <td className={`pr-[6px] text-right ${selected ? bg : "bg-[#f5f5f5]"}`}>{cells[1]}</td>
              <td className={`pr-[6px] text-right ${bg}`}>{cells[2]}</td>
              <td className={`pl-[7px] ${bg}`}>{cells[3]}</td>
              <td className={`pl-[7px] ${bg}`}>{cells[4]}</td>
              <td className={`pl-[6px] ${bg}`}>{cells[5]}</td>
              <td />
            </tr>
          );
        })}
        <tr><td /><td className="bg-[#f5f5f5]" /><td colSpan={5} /></tr>
      </tbody>
    </table>
  </div>
);

const ArchiveWindow = () => (
  <section aria-label="WinRAR" className="absolute left-[301px] top-[416px] flex h-[515px] w-[1003px] flex-col bg-white text-[17px] text-black">
    <div className="flex h-[45px] items-center pl-[11px]">
      <SmallBooks />
      <h2 className="ml-[6px]">Executable_file_(Zamini_Converter_v1.0.0).rar (evaluation copy)</h2>
      <div className="ml-auto flex items-center">
        <button type="button" aria-label="Minimize" className="flex w-[70px] justify-center"><svg width="15" height="15"><path d="M0 7.5h15" stroke="#000" /></svg></button>
        <button type="button" aria-label="Maximize" className="flex w-[70px] justify-center"><svg width="16" height="16"><path d="M.5.5h14v14H.5z" fill="none" stroke="#000" /></svg></button>
        <button type="button" aria-label="Close" className="flex w-[70px] justify-center"><svg width="15" height="15" stroke="#000"><path d="M0 0l15 15M15 0L0 15" /></svg></button>
      </div>
    </div>
    <div className="flex h-[29px] items-center gap-[14px] border-b-2 border-[#f0f0f0] pl-[7px] pt-px">
      {menu.map(([a, b, c]) => (
        <button key={a + b + c} type="button">{a}<span className="underline">{b}</span>{c}</button>
      ))}
    </div>
    <div className="ml-[4px] flex flex-col border-l-2 border-dotted border-[#c8c8c8]">
      <div className="flex h-[93px] pl-[5px] pt-1">
        {tools.map((t, i) =>
          t ? (
            <button key={t[0]} type="button" className={`flex shrink-0 flex-col items-center ${t[2]}`}>
              <span className="flex h-14 items-center">{t[1]}</span>
              <span className="leading-[28px]">{t[0]}</span>
            </button>
          ) : (
            <span key={i} className="mb-[6px] ml-px mr-px w-px bg-[#909090]" />
          )
        )}
      </div>
      <div className="flex h-[37px] pl-[10px]">
        <span className="w-[6px] border-l-2 border-dotted border-[#c8c8c8]" />
        <button type="button" aria-label="Archive location" className="flex h-[34px] flex-1 items-center border border-[#7a7a7a] pl-[2px] pr-[6px] pt-px">
          <SmallBooks arrow />
          <span className="ml-[5px]">Executable_file_(Zamini_Converter_v1.0.0).rar - RAR archive, unpacked size 50,039,581 bytes</span>
          <Chevron dir="down" width={12} height={8} stroke={1} className="ml-auto" />
        </button>
      </div>
    </div>
    <ArchiveList />
    <div className="flex h-[37px] items-center bg-[#f0f0f0] pl-1">
      <svg width="24" height="18" viewBox="0 0 24 18"><path d="M0 3l4-3h19v11l-4 5H0z" fill="#7d7a3c" /><path d="M1 4h17v11H1z" fill="#c8cc9e" /><path d="M3 6h13v3H3z" fill="#f4f7e8" /><path d="M3 12h11" stroke="#3d7c60" strokeWidth="2" /></svg>
      <svg className="ml-[3px]" width="25" height="14" viewBox="0 0 25 14"><path d="M0 4h14v4h-2v3h-2V8H7v3H5V8H0z" fill="#222" /><path d="M15 2h8v10h-8z" fill="#d2c17a" stroke="#111" strokeWidth="3" /></svg>
      <span className="ml-[6px] flex h-full flex-1 items-center border-l border-[#d0d0d0] pl-1 pt-[3px]">Selected 50,038,076 bytes in 1 file</span>
      <span className="flex h-full w-[471px] items-center justify-between border-l border-[#d0d0d0] pl-1 pt-[3px]">
        Total 50,039,581 bytes in 2 files
        <svg className="mr-px mt-4" width="13" height="13" viewBox="0 0 13 13" fill="#b4b4b4"><path d="M10 0h3v3h-3zM10 5h3v3h-3zM5 5h3v3H5zM10 10h3v3h-3zM5 10h3v3H5zM0 10h3v3H0z" /></svg>
      </span>
    </div>
  </section>
);

export default function App() {
  return (
    <div className="relative flex h-screen flex-col overflow-hidden bg-[#202020] font-['Open_Sans',sans-serif] font-normal">
      <TitleBar />
      <Tabs />
      <Ribbon />
      <AddressRow />
      <div className="flex min-h-0 flex-1">
        <Sidebar />
        <FileTable />
      </div>
      <StatusBar />
      <ArchiveWindow />
      <div className="absolute left-1/2 top-[10px] -translate-x-1/2 whitespace-nowrap bg-black/70 px-[18px] pt-4 font-['Liberation_Sans',sans-serif] text-[100px] font-normal leading-[98px] text-white">
        Step 1: Download
      </div>
    </div>
  );
}
